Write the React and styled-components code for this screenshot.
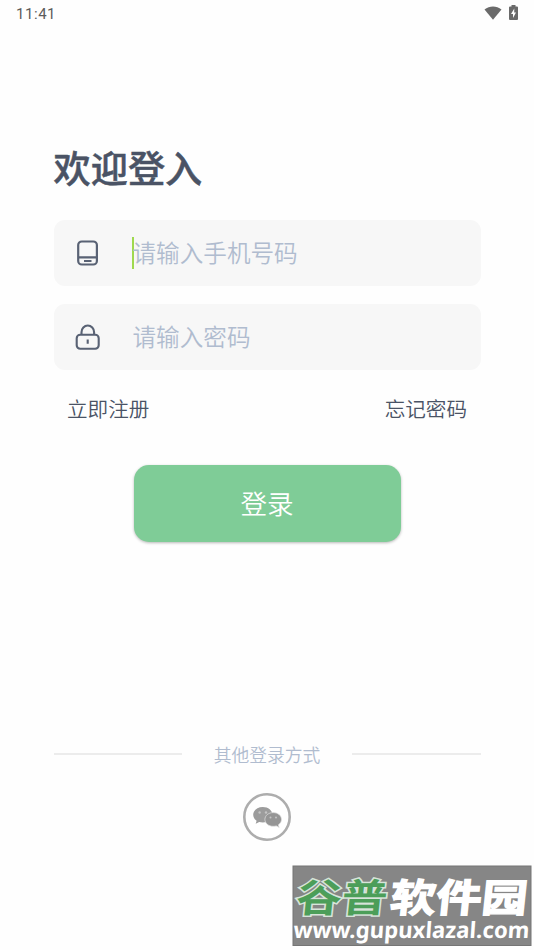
import React, { useState } from "react";
import styled, { createGlobalStyle } from "styled-components";

const GlobalStyle = createGlobalStyle`
    * {
        box-sizing: border-box;
    }
    body {
        margin: 0;
        background-color: #fefefe;
        font-family: "Noto Sans CJK SC", sans-serif;
        font-weight: 350;
        color: #4a5365;
    }
`;

const Page = styled.div`
    position: relative;
    display: flex;
    flex-direction: column;
    height: 950px;
    overflow: hidden;
`;

const StatusBar = styled.header`
    display: flex;
    justify-content: space-between;
    align-items: center;
    height: 28px;
    padding: 0 15px 0 16px;
    font-family: Roboto, sans-serif;
    font-size: 15px;
    font-weight: 400;
    letter-spacing: 0.55px;
    color: #5c5c5c;
    .icons {
        display: flex;
        align-items: center;
        gap: 7px;
        padding: 0 1px 3px 0;
    }
`;

const Main = styled.main`
    display: flex;
    flex-direction: column;
    padding: 112px 53.5px 0;
`;

const Title = styled.h1`
    margin: 0 0 25px;
    font-size: 37.2px;
    font-weight: 500;
    line-height: 55px;
    -webkit-text-stroke: 0.5px #4a5365;
`;

const Form = styled.form`
    display: flex;
    flex-direction: column;
    gap: 18px;
`;

const Field = styled.label`
    display: flex;
    align-items: center;
    height: 66px;
    padding-left: 19px;
    border-radius: 11px;
    background-color: #f7f7f7;
    svg {
        flex: none;
        margin: 0 32px 2px 0;
    }
`;

const Caret = styled.span`
    width: 2px;
    height: 32px;
    margin: 0 -1.2px 0 -0.8px;
    background-color: ${(props) => (props.$on ? "#9fd94f" : "transparent")};
`;

const Input = styled.input`
    flex: 1;
    min-width: 0;
    height: 40px;
    padding: 0 0 2px;
    border: none;
    outline: none;
    background: none;
    font-family: inherit;
    font-size: 23.6px;
    font-weight: 350;
    color: #4a5365;
    &::placeholder {
        color: #b0bccf;
        opacity: 1;
    }
`;

const Links = styled.div`
    display: flex;
    justify-content: space-between;
    padding: 23px 13.5px 0;
    font-size: 20.6px;
    line-height: 30px;
`;

const LoginButton = styled.button`
    align-self: center;
    width: 267px;
    height: 77.5px;
    margin-top: 41.5px;
    padding: 0 0 2px;
    border: none;
    border-radius: 15px;
    background-color: #7fcc97;
    box-shadow: 0 1px 3px rgba(0, 0, 0, 0.28);
    font-family: inherit;
    font-size: 26.6px;
    font-weight: 350;
    color: #fff;
`;

const Others = styled.section`
    display: flex;
    flex-direction: column;
    align-items: center;
    padding: 198px 53.5px 0;
`;

const Divider = styled.div`
    display: flex;
    align-items: center;
    gap: 32px;
    width: 100%;
    margin-bottom: 24px;
    font-size: 17.8px;
    line-height: 28px;
    color: #b0bccf;
    &::before,
    &::after {
        content: "";
        flex: 1;
        height: 2px;
        background-color: #ececec;
    }
`;

const Watermark = styled.div`
    position: absolute;
    left: 292px;
    top: 865px;
    svg {
        display: block;
    }
`;

function PhoneIcon() {
    return (
        <svg width="28" height="28" viewBox="0 0 28 28" fill="none" stroke="#596274" strokeWidth="2.2">
            <rect x="5.200" y="3.500" width="18.700" height="23" rx="3.600" />
            <path d="M5.200 19.300h18.700M11 23h7.500" />
        </svg>
    );
}

function LockIcon() {
    return (
        <svg width="28" height="28" viewBox="0 0 28 28" fill="none" stroke="#596274" strokeWidth="2.1">
            <rect x="3.700" y="12.700" width="22" height="14" rx="3.500" />
            <path d="M8.500 12.700v-2.500a6.300 6.700 0 0 1 12.600 0v2.500M14.700 17.400v4.300" />
        </svg>
    );
}

function WechatIcon() {
    return (
        <svg width="50" height="50" viewBox="0 0 50 50">
            <circle cx="25" cy="25" r="22.700" fill="#fff" stroke="#adadad" strokeWidth="2.600" />
            <path d="M20.800 15c-5.500 0-9.600 3.500-9.600 7.800 0 2.500 1.300 4.500 3.400 6l-.9 3 3.500-1.800c1.100.3 2.300.5 3.600.5 5.500 0 9.600-3.400 9.600-7.700S26.300 15 20.800 15z" fill="#9c9c9c" />
            <path d="M31.200 20.600c-4.700 0-8.300 3-8.300 6.800s3.600 6.900 8.300 6.900c1.100 0 2.100-.2 3.100-.4l2.900 1.500-.8-2.600c1.900-1.300 3.100-3.200 3.100-5.400 0-3.800-3.600-6.800-8.300-6.800z" fill="#959595" stroke="#e4e4e4" strokeWidth="0.700" />
            <g fill="#c4c4c4">
                <circle cx="17.600" cy="20.500" r="1.200" />
                <circle cx="24" cy="20.500" r="1.200" />
                <circle cx="28.500" cy="25.500" r="1" />
                <circle cx="34" cy="25.500" r="1" />
            </g>
        </svg>
    );
}

function SiteMark() {
    return (
        <Watermark>
            <svg width="240" height="82" viewBox="0 0 240 82">
                <rect x="1" y="1" width="238" height="79.500" fill="#868686" stroke="#757575" />
                <g fontFamily="Noto Sans CJK SC, sans-serif" fontWeight="700" fontSize="39" transform="skewX(-6)">
                    <text x="8" y="47" textLength="91" lengthAdjust="spacingAndGlyphs" fill="#4c9e59" stroke="#d7e4d9" strokeWidth="3" paintOrder="stroke">谷普</text>
                    <text x="102" y="47" textLength="137" lengthAdjust="spacingAndGlyphs" fill="#fff" stroke="#fff" strokeWidth="1.300">软件园</text>
                </g>
                <text x="6" y="73" textLength="236" lengthAdjust="spacingAndGlyphs" fontFamily="Noto Sans, sans-serif" fontWeight="700" fontSize="22.500" fill="#fff" transform="skewX(-4)">www.gupuxlazal.com</text>
            </svg>
        </Watermark>
    );
}

function App() {
    const [phone, setPhone] = useState("");
    const [password, setPassword] = useState("");
    // 当前选中的输入框
    const [active, setActive] = useState("phone");

    return (
        <Page>
            <GlobalStyle />
            <StatusBar>
                <span>11:41</span>
                <div className="icons">
                    <svg width="18" height="14" viewBox="0 0 18 14">
                        <path d="M0.500 3.500C5.500-.6 12.500-.6 17.500 3.500L9 13.700z" fill="#6a6a6a" />
                    </svg>
                    <svg width="9" height="15" viewBox="0 0 9 15">
                        <path d="M2.500 0h4v1.500H8a1 1 0 0 1 1 1V14a1 1 0 0 1-1 1H1a1 1 0 0 1-1-1V2.500a1 1 0 0 1 1-1h1.500z" fill="#6a6a6a" />
                        <path d="M5.300 3.600L2 9h2v4l3-5.500H5.200z" fill="#fff" />
                    </svg>
                </div>
            </StatusBar>
            <Main>
                <Title>欢迎登入</Title>
                <Form>
                    <Field>
                        <PhoneIcon />
                        <Caret $on={active === "phone"} />
                        <Input
                            value={phone}
                            placeholder="请输入手机号码"
                            onFocus={() => setActive("phone")}
                            onChange={(e) => setPhone(e.target.value)}
                        />
                    </Field>
                    <Field>
                        <LockIcon />
                        <Caret $on={active === "password"} />
                        <Input
                            type="password"
                            value={password}
                            placeholder="请输入密码"
                            onFocus={() => setActive("password")}
                            onChange={(e) => setPassword(e.target.value)}
                        />
                    </Field>
                </Form>
                <Links>
                    <span>立即注册</span>
                    <span>忘记密码</span>
                </Links>
                <LoginButton type="button">登录</LoginButton>
            </Main>
            <Others>
                <Divider>其他登录方式</Divider>
                <WechatIcon />
            </Others>
            <SiteMark />
        </Page>
    );
}

export default App;
